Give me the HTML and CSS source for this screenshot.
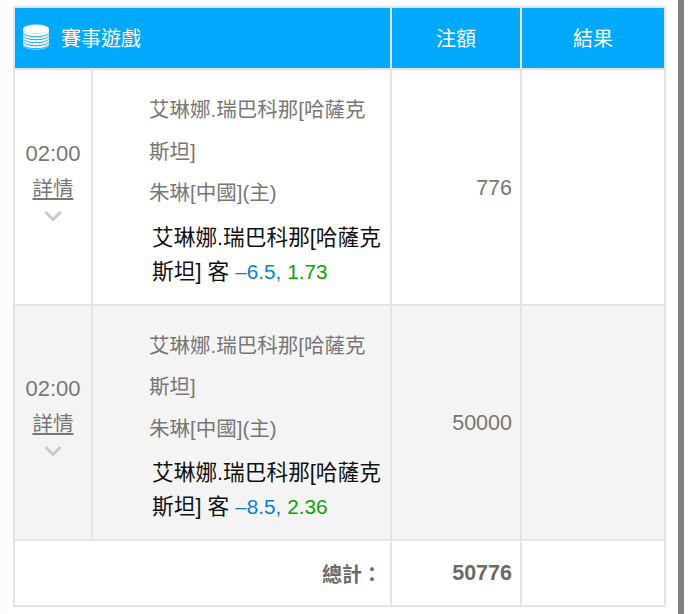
FILE: index.html
```html
<!DOCTYPE html>
<html lang="zh-Hant">
<head>
<meta charset="utf-8">
<title>賽事遊戲</title>
<link rel="stylesheet" href="styles.css">
</head>
<body>
<div class="page">
  <div class="edge"></div>
  <main class="content">
    <table class="bets">
      <colgroup>
        <col class="c-time"><col class="c-game"><col class="c-amount"><col class="c-result">
      </colgroup>
      <thead>
        <tr>
          <th colspan="2" class="head-game">
            <div class="head-title">
              <svg class="stack" viewBox="0 0 28 26" width="28" height="26" aria-hidden="true">
                <ellipse cx="14" cy="5" rx="13" ry="4.5" fill="#fff"/>
                <path d="M1 5v16c0 2.5 5.8 4.5 13 4.5s13-2 13-4.5V5c0 2.5-5.800 4.500-13 4.500S1 7.500 1 5z" fill="#fff"/>
                <g fill="none" stroke="#00a9fb" stroke-width="1">
                  <path d="M1 8.500c1 2.500 6 4.200 13 4.200s12-1.700 13-4.200"/>
                  <path d="M1 11.500c1 2.500 6 4.200 13 4.200s12-1.700 13-4.200"/>
                  <path d="M1 14.500c1 2.500 6 4.200 13 4.200s12-1.700 13-4.200"/>
                  <path d="M1 17.500c1 2.500 6 4.200 13 4.200s12-1.700 13-4.200"/>
                  <path d="M1 20.500c1 2.500 6 4.200 13 4.200s12-1.700 13-4.200"/>
                </g>
              </svg>
              <span>賽事遊戲</span>
            </div>
          </th>
          <th>注額</th>
          <th>結果</th>
        </tr>
      </thead>
      <tbody>
        <tr class="row">
          <td class="time">
            <div class="clock">02:00</div>
            <a class="detail" href="#">詳情</a>
            <svg class="chev" viewBox="0 0 18 12" width="18" height="12" aria-hidden="true"><path d="M1.500 2l7.500 7.500L16.500 2" fill="none" stroke="#c8c8c8" stroke-width="3"/></svg>
          </td>
          <td class="game">
            <div class="teams">艾琳娜.瑞巴科那[哈薩克斯坦]</div>
            <div class="teams">朱琳[中國](主)</div>
            <div class="pick">艾琳娜.瑞巴科那[哈薩克斯坦] 客 <span class="hcp">–6.5,</span> <span class="odds">1.73</span></div>
          </td>
          <td class="amount">776</td>
          <td></td>
        </tr>
        <tr class="row alt">
          <td class="time">
            <div class="clock">02:00</div>
            <a class="detail" href="#">詳情</a>
            <svg class="chev" viewBox="0 0 18 12" width="18" height="12" aria-hidden="true"><path d="M1.500 2l7.500 7.500L16.500 2" fill="none" stroke="#c8c8c8" stroke-width="3"/></svg>
          </td>
          <td class="game">
            <div class="teams">艾琳娜.瑞巴科那[哈薩克斯坦]</div>
            <div class="teams">朱琳[中國](主)</div>
            <div class="pick">艾琳娜.瑞巴科那[哈薩克斯坦] 客 <span class="hcp">–8.5,</span> <span class="odds">2.36</span></div>
          </td>
          <td class="amount">50000</td>
          <td></td>
        </tr>
      </tbody>
      <tfoot>
        <tr>
          <td colspan="2" class="total-label">總計：</td>
          <td class="total-value">50776</td>
          <td></td>
        </tr>
      </tfoot>
    </table>
  </main>
  <div class="scrollbar"></div>
</div>
</body>
</html>
```
FILE: styles.css
```css
* { box-sizing: border-box; }
html, body { margin: 0; padding: 0; background: #fff; }
body {
  font-family: "Liberation Sans", "Noto Sans CJK TC", sans-serif;
  color: #777;
}
.page { display: flex; height: 614px; overflow: hidden; }
.edge { width: 8px; background: #fbfbfb; }
.content { width: 670px; padding: 6px 0 0 5px; }
.bets {
  table-layout: fixed;
  border-collapse: collapse;
  width: 653px;
}
.c-time { width: 78px; }
.c-game { width: 299px; }
.c-amount { width: 130px; }
.c-result { width: 144px; }
.bets th, .bets td { border: 2px solid #e4e4e4; padding: 0; }
.bets th {
  height: 62px;
  background: #00a9fb;
  color: #fff;
  font-size: 20px;
  font-weight: 400;
  text-align: center;
  padding-bottom: 2px;
}
.head-title { display: flex; align-items: center; gap: 11px; padding-left: 7px; }
.stack { display: block; }
.row td { height: 235px; vertical-align: middle; }
.alt td { background: #f4f4f4; }
.time { text-align: center; padding-bottom: 16px !important; }
.clock { font-size: 22px; line-height: 36px; }
.detail { display: block; font-size: 20.500px; line-height: 34px; color: #777; text-decoration: underline; }
.chev { display: block; margin: 4px auto 0; }
.game { padding: 19px 8px 15px 56px !important; }
.teams { font-size: 20.500px; line-height: 41.500px; max-width: 222px; }
.pick { font-size: 21.700px; line-height: 34px; color: #111; margin: 7px 0 0 3px; }
.hcp { color: #0a7fd0; font-size: 20.700px; }
.odds { color: #0aa50a; font-size: 20.700px; }
.amount { text-align: right; font-size: 21.500px; padding: 3px 8px 0 0 !important; }
.bets tfoot td { height: 66px; font-weight: 700; color: #6a6a6a; }
.total-label { text-align: right; font-size: 20px; padding-right: 8px !important; }
.total-value { text-align: right; font-size: 21.500px; padding-right: 8px !important; }
.scrollbar { width: 6px; background: #808080; }
```
